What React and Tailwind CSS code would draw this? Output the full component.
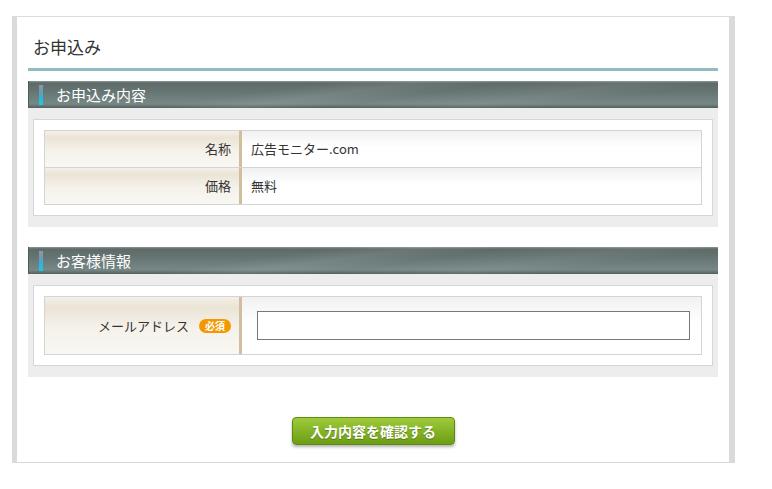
import React from 'react';

const font = { fontFamily: '"Noto Sans CJK JP", "Noto Sans", sans-serif' };

const SectionHeader = ({ title }) => (
  <div className="relative flex h-[27px] items-center overflow-hidden border-l border-l-[#4f5b59] bg-[linear-gradient(to_bottom,#8d9897_0px,#5d6a68_2px,#667573_40%,#768886_85%,#52605d_100%)]">
    <div className="pointer-events-none absolute inset-0 bg-[linear-gradient(172deg,transparent_35%,rgba(255,255,255,0.08)_45%,transparent_55%,rgba(255,255,255,0.06)_70%,transparent_80%)]" />
    <div className="relative ml-[10px] h-[20px] w-[4px] bg-[linear-gradient(to_bottom,#8c9ba3_0%,#6f99aa_30%,#2fb6d8_65%,#17cbf0_100%)]" />
    <span className="relative ml-[13px] text-[15px] leading-none text-white">{title}</span>
  </div>
);

const Row = ({ label, children, tall, last }) => {
  let h = 'h-[37px] border-b border-[#d4d4d4]';
  if (last) h = tall ? 'h-[57px]' : 'h-[36px]';
  return (
    <div className={`flex ${h}`}>
      <div className="flex w-[194px] items-center justify-end pr-[8px] bg-[linear-gradient(to_bottom,#f4f0e8_0%,#ebe4d6_18%,#f5f2eb_55%,#f9f7f3_100%)] text-[13px] text-[#333]">
        {label}
      </div>
      <div className="w-[3px] bg-[#d1bf9c]" />
      <div className="flex flex-1 items-center bg-[linear-gradient(to_bottom,#f1f1f1_0%,#ffffff_45%)] text-[13px] text-[#333]">
        {children}
      </div>
    </div>
  );
};

const Section = ({ title, children }) => (
  <div>
    <SectionHeader title={title} />
    <div className="bg-[#ededed] px-[5px] py-[11px]">
      <div className="border border-[#d6d6d6] bg-white p-[10px]">
        <div className="border border-[#d4d4d4]">{children}</div>
      </div>
    </div>
  </div>
);

export default function App() {
  return (
    <div className="min-h-screen bg-white pl-[12px] pt-[16px]" style={font}>
      <div className="w-[723px] border-x-[5px] border-r-[6px] border-y border-[#dadada] border-t-[#dcdcdc] border-b-[#d8d8d8] bg-white px-[11px]">
        <div className="pl-[5px] pt-[20px] pb-[11px] text-[17px] leading-[20px] text-[#333]">お申込み</div>
        <div className="h-[3px] bg-[#93bcc1]" />

        <div className="mt-[10px]">
          <Section title="お申込み内容">
            <Row label="名称">
              <span className="pl-[9px]">広告モニター.com</span>
            </Row>
            <Row label="価格" last>
              <span className="pl-[9px]">無料</span>
            </Row>
          </Section>
        </div>

        <div className="mt-[20px]">
          <Section title="お客様情報">
            <Row label={
              <span className="flex items-center">
                メールアドレス
                <span className="ml-[10px] rounded-full bg-[#f39800] px-[6px] text-[10px] font-bold leading-[14px] text-white">必須</span>
              </span>
            } tall last>
              <input
                type="text"
                className="ml-[15px] mr-[11px] h-[29px] flex-1 border border-[#777] bg-white px-2 text-[13px] outline-none"
              />
            </Row>
          </Section>
        </div>

        <div className="flex justify-center pt-[40px] pb-[17px]">
          <button className="h-[28px] w-[163px] rounded-[4px] border border-[#5f8a12] bg-[linear-gradient(to_bottom,#9fcb3c_0%,#84b425_50%,#6e9d16_100%)] text-[14px] font-bold text-white shadow-[0_2px_3px_rgba(0,0,0,0.3)] [text-shadow:0_1px_1px_rgba(0,0,0,0.3)]">
            入力内容を確認する
          </button>
        </div>
      </div>
    </div>
  );
}
